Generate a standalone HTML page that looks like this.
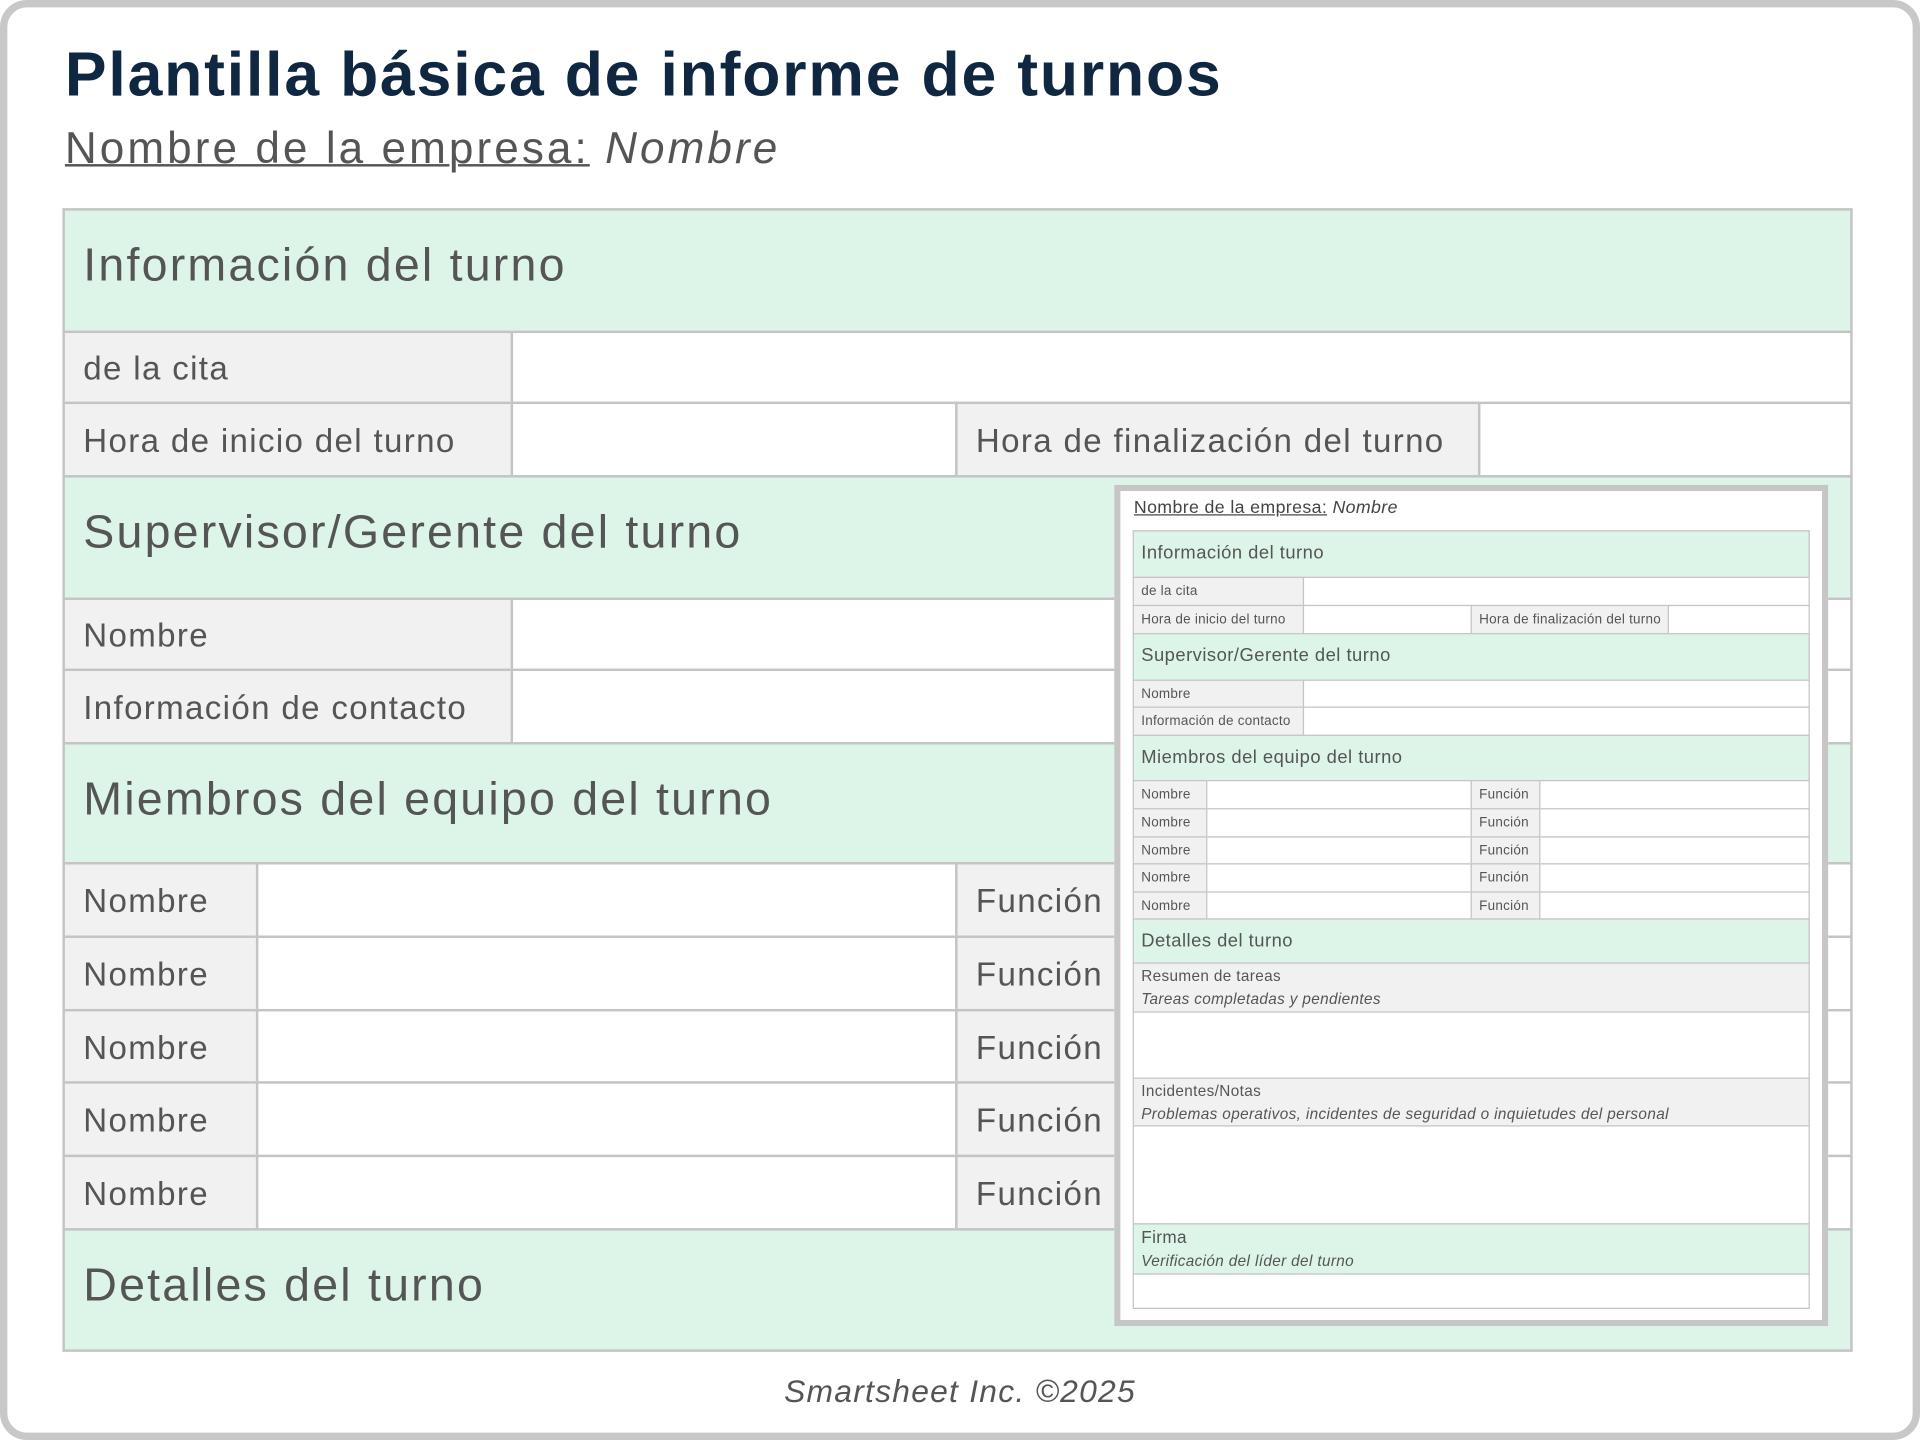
<!DOCTYPE html>
<html><head><meta charset="utf-8"><style>
html,body{margin:0;padding:0;background:#fff;}
body{width:1920px;height:1440px;overflow:hidden;position:relative;}
#s{position:absolute;left:0;top:0;width:1568px;height:1176px;transform:scale(1.22449);transform-origin:0 0;font-family:"Liberation Sans",sans-serif;color:#555;}
.f{position:absolute;left:0;top:0;width:1568px;height:1176px;box-sizing:border-box;border:6px solid #c8c8c8;border-radius:22px;background:#fff;}
.c{position:absolute;box-sizing:border-box;border:2px solid #c4c4c4;white-space:nowrap;overflow:hidden;}
.g{background:#dcf5e8;}.y{background:#f1f1f1;}.w{background:#fff;}
.h{font-size:38px;padding:24px 0 0 15px;letter-spacing:1.8px;}
.l{font-size:27px;padding:3px 0 0 15px;display:flex;align-items:center;letter-spacing:1.1px;}
.sc{position:absolute;box-sizing:border-box;border:1px solid #c4c4c4;white-space:nowrap;overflow:hidden;}
.sh{font-size:15px;padding:9px 0 0 6px;letter-spacing:0.4px;}
.sl{font-size:11px;padding:0 0 0 6px;display:flex;align-items:center;letter-spacing:0.2px;}
.sm{font-size:12.5px;padding:1px 0 0 6px;line-height:19px;letter-spacing:0.3px;}
</style></head><body><div id="s">
<div class="f"></div>
<div style="position:absolute;left:53px;top:31px;font-size:51px;font-weight:bold;color:#0f2740;letter-spacing:1.5px;">Plantilla básica de informe de turnos</div>
<div style="position:absolute;left:53px;top:100px;font-size:36px;color:#555;letter-spacing:2.5px;"><span style="text-decoration:underline;text-decoration-thickness:2px;">Nombre de la empresa:</span> <i>Nombre</i></div>

<div class="c g h" style="left:51px;top:170px;width:1462px;height:102px">Información del turno</div>
<div class="c y l" style="left:51px;top:270px;width:368px;height:60px">de la cita</div>
<div class="c w" style="left:417px;top:270px;width:1096px;height:60px"></div>
<div class="c y l" style="left:51px;top:328px;width:368px;height:62px">Hora de inicio del turno</div>
<div class="c w" style="left:417px;top:328px;width:365px;height:62px"></div>
<div class="c y l" style="left:780px;top:328px;width:429px;height:62px">Hora de finalización del turno</div>
<div class="c w" style="left:1207px;top:328px;width:306px;height:62px"></div>
<div class="c g h" style="left:51px;top:388px;width:1462px;height:102px">Supervisor/Gerente del turno</div>
<div class="c y l" style="left:51px;top:488px;width:368px;height:60px">Nombre</div>
<div class="c w" style="left:417px;top:488px;width:1096px;height:60px"></div>
<div class="c y l" style="left:51px;top:546px;width:368px;height:62px">Información de contacto</div>
<div class="c w" style="left:417px;top:546px;width:1096px;height:62px"></div>
<div class="c g h" style="left:51px;top:606px;width:1462px;height:100px">Miembros del equipo del turno</div>

<div class="c y l" style="left:51px;top:704px;width:160px;height:62px">Nombre</div><div class="c w" style="left:209px;top:704px;width:573px;height:62px"></div><div class="c y l" style="left:780px;top:704px;width:152px;height:62px">Función</div><div class="c w" style="left:930px;top:704px;width:583px;height:62px"></div>
<div class="c y l" style="left:51px;top:764px;width:160px;height:62px">Nombre</div><div class="c w" style="left:209px;top:764px;width:573px;height:62px"></div><div class="c y l" style="left:780px;top:764px;width:152px;height:62px">Función</div><div class="c w" style="left:930px;top:764px;width:583px;height:62px"></div>
<div class="c y l" style="left:51px;top:824px;width:160px;height:61px">Nombre</div><div class="c w" style="left:209px;top:824px;width:573px;height:61px"></div><div class="c y l" style="left:780px;top:824px;width:152px;height:61px">Función</div><div class="c w" style="left:930px;top:824px;width:583px;height:61px"></div>
<div class="c y l" style="left:51px;top:883px;width:160px;height:62px">Nombre</div><div class="c w" style="left:209px;top:883px;width:573px;height:62px"></div><div class="c y l" style="left:780px;top:883px;width:152px;height:62px">Función</div><div class="c w" style="left:930px;top:883px;width:583px;height:62px"></div>
<div class="c y l" style="left:51px;top:943px;width:160px;height:62px">Nombre</div><div class="c w" style="left:209px;top:943px;width:573px;height:62px"></div><div class="c y l" style="left:780px;top:943px;width:152px;height:62px">Función</div><div class="c w" style="left:930px;top:943px;width:583px;height:62px"></div>
<div class="c g h" style="left:51px;top:1003px;width:1462px;height:101px">Detalles del turno</div>

<div style="position:absolute;left:0;width:1568px;top:1121px;text-align:center;font-size:26px;font-style:italic;color:#555;letter-spacing:1px;">Smartsheet Inc. ©2025</div>

<div style="position:absolute;left:910px;top:396px;width:583px;height:687px;box-sizing:border-box;border:5px solid #c6c6c6;background:#fff;"></div>
<div style="position:absolute;left:926px;top:407px;font-size:14.5px;color:#444;letter-spacing:0.3px;"><span style="text-decoration:underline;">Nombre de la empresa:</span> <i>Nombre</i></div>
<div class="sc g sh" style="left:925px;top:433px;width:553px;height:39px">Información del turno</div>
<div class="sc y sl" style="left:925px;top:471px;width:140px;height:24px">de la cita</div><div class="sc w" style="left:1064px;top:471px;width:414px;height:24px"></div>
<div class="sc y sl" style="left:925px;top:494px;width:140px;height:24px">Hora de inicio del turno</div><div class="sc w" style="left:1064px;top:494px;width:138px;height:24px"></div><div class="sc y sl" style="left:1201px;top:494px;width:162px;height:24px">Hora de finalización del turno</div><div class="sc w" style="left:1362px;top:494px;width:116px;height:24px"></div>
<div class="sc g sh" style="left:925px;top:517px;width:553px;height:39px">Supervisor/Gerente del turno</div>
<div class="sc y sl" style="left:925px;top:555px;width:140px;height:23px">Nombre</div><div class="sc w" style="left:1064px;top:555px;width:414px;height:23px"></div>
<div class="sc y sl" style="left:925px;top:577px;width:140px;height:24px">Información de contacto</div><div class="sc w" style="left:1064px;top:577px;width:414px;height:24px"></div>
<div class="sc g sh" style="left:925px;top:600px;width:553px;height:38px">Miembros del equipo del turno</div>
<div class="sc y sl" style="left:925px;top:637px;width:61px;height:24px">Nombre</div><div class="sc w" style="left:985px;top:637px;width:217px;height:24px"></div><div class="sc y sl" style="left:1201px;top:637px;width:57px;height:24px">Función</div><div class="sc w" style="left:1257px;top:637px;width:221px;height:24px"></div>
<div class="sc y sl" style="left:925px;top:660px;width:61px;height:24px">Nombre</div><div class="sc w" style="left:985px;top:660px;width:217px;height:24px"></div><div class="sc y sl" style="left:1201px;top:660px;width:57px;height:24px">Función</div><div class="sc w" style="left:1257px;top:660px;width:221px;height:24px"></div>
<div class="sc y sl" style="left:925px;top:683px;width:61px;height:23px">Nombre</div><div class="sc w" style="left:985px;top:683px;width:217px;height:23px"></div><div class="sc y sl" style="left:1201px;top:683px;width:57px;height:23px">Función</div><div class="sc w" style="left:1257px;top:683px;width:221px;height:23px"></div>
<div class="sc y sl" style="left:925px;top:705px;width:61px;height:24px">Nombre</div><div class="sc w" style="left:985px;top:705px;width:217px;height:24px"></div><div class="sc y sl" style="left:1201px;top:705px;width:57px;height:24px">Función</div><div class="sc w" style="left:1257px;top:705px;width:221px;height:24px"></div>
<div class="sc y sl" style="left:925px;top:728px;width:61px;height:23px">Nombre</div><div class="sc w" style="left:985px;top:728px;width:217px;height:23px"></div><div class="sc y sl" style="left:1201px;top:728px;width:57px;height:23px">Función</div><div class="sc w" style="left:1257px;top:728px;width:221px;height:23px"></div>
<div class="sc g sh" style="left:925px;top:750px;width:553px;height:37px">Detalles del turno</div>
<div class="sc y sm" style="left:925px;top:786px;width:553px;height:41px">Resumen de tareas<br><i>Tareas completadas y pendientes</i></div>
<div class="sc w" style="left:925px;top:826px;width:553px;height:55px"></div>
<div class="sc y sm" style="left:925px;top:880px;width:553px;height:40px">Incidentes/Notas<br><i>Problemas operativos, incidentes de seguridad o inquietudes del personal</i></div>
<div class="sc w" style="left:925px;top:919px;width:553px;height:81px"></div>
<div class="sc g sm" style="left:925px;top:999px;width:553px;height:42px;font-size:14px;"><span>Firma</span><br><i style="font-size:12.5px">Verificación del líder del turno</i></div>
<div class="sc w" style="left:925px;top:1040px;width:553px;height:29px"></div>
</div></body></html>
